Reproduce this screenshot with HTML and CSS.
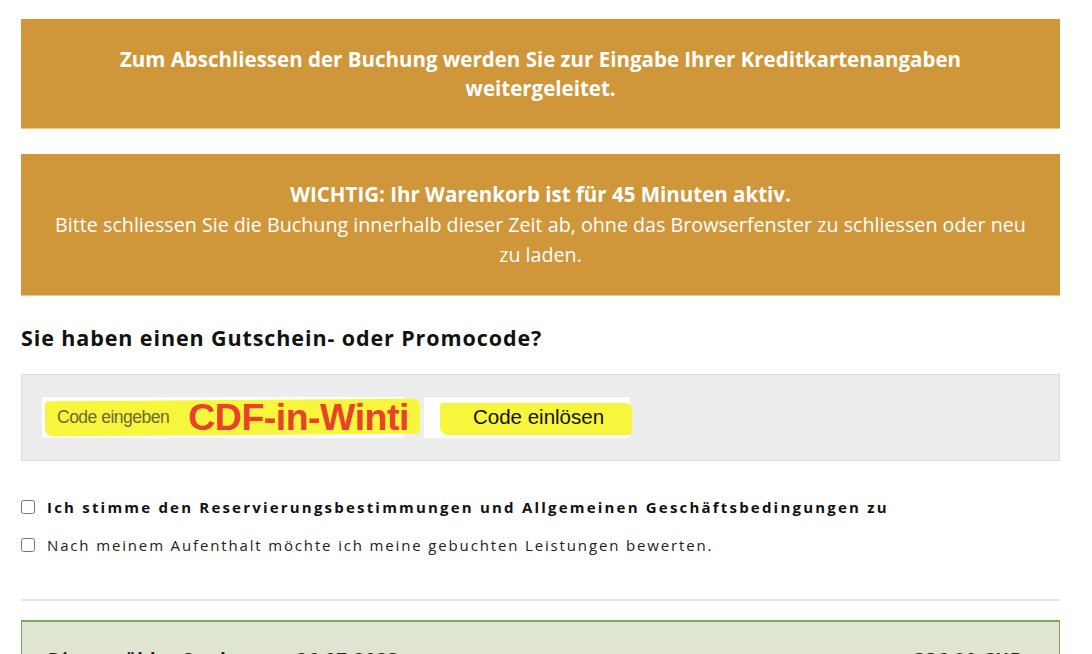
FILE: index.html
```html
<!DOCTYPE html>
<html lang="de">
<head>
<meta charset="utf-8">
<title>Buchung abschliessen</title>
<link rel="stylesheet" href="styles.css">
</head>
<body>
<main class="page">
  <div class="notice notice-first">
    <p class="notice-bold">Zum Abschliessen der Buchung werden Sie zur Eingabe Ihrer Kreditkartenangaben weitergeleitet.</p>
  </div>
  <div class="notice notice-second">
    <p class="notice-bold">WICHTIG: Ihr Warenkorb ist für 45 Minuten aktiv.</p>
    <p class="notice-regular">Bitte schliessen Sie die Buchung innerhalb dieser Zeit ab, ohne das Browserfenster zu schliessen oder neu zu laden.</p>
  </div>

  <h2 class="promo-title">Sie haben einen Gutschein- oder Promocode?</h2>
  <div class="promo-box">
    <div class="promo-input">
      <span class="marker marker-input"></span>
      <span class="placeholder">Code eingeben</span>
      <span class="code-value">CDF-in-Winti</span>
    </div>
    <div class="promo-button">
      <span class="marker marker-button"></span>
      <span class="button-label">Code einlösen</span>
    </div>
  </div>

  <label class="check-row check-strong"><input type="checkbox"><span>Ich stimme den Reservierungsbestimmungen und Allgemeinen Geschäftsbedingungen zu</span></label>
  <label class="check-row"><input type="checkbox"><span>Nach meinem Aufenthalt möchte ich meine gebuchten Leistungen bewerten.</span></label>

  <hr class="divider">

  <div class="summary">
    <span class="summary-label">Die gewählte Stadttour - 26.07.2023</span>
    <span class="summary-price">336.00 CHF</span>
  </div>
</main>
</body>
</html>
```

FILE: styles.css
```css
html, body {
  margin: 0;
  padding: 0;
  background: #ffffff;
}

body {
  font-family: "Open Sans", "Liberation Sans", sans-serif;
  color: #111;
}

.page {
  width: 1039px;
  margin-left: 21px;
  padding-top: 19px;
}

.notice {
  background: #d0963a;
  color: #ffffff;
  text-align: center;
  border-bottom: 1px solid #e7c88f;
}

.notice p {
  margin: 0;
}

.notice-first {
  padding: 26px 60px 25px;
  line-height: 29px;
}

.notice-second {
  margin-top: 25px;
  padding: 25px 30px 24px;
  line-height: 30.5px;
}

.notice-bold {
  font-weight: 700;
  font-size: 20.5px;
}

.notice-regular {
  font-family: "Open Sans", sans-serif;
  font-size: 19.7px;
  font-weight: 400;
}

.promo-title {
  margin: 28px 0 22px;
  font-family: "Open Sans", "Liberation Sans", sans-serif;
  font-size: 21.5px;
  font-weight: 700;
  line-height: 28px;
  color: #111;
  letter-spacing: 0.9px;
}

.promo-box {
  display: flex;
  align-items: center;
  gap: 20px;
  height: 85px;
  padding: 0 20px;
  background: #ededed;
  border: 1px solid #dcdcdc;
}

.promo-input,
.promo-button {
  position: relative;
  display: flex;
  align-items: center;
  flex-shrink: 0;
  height: 41px;
  background: #ffffff;
  white-space: nowrap;
}

.promo-input {
  width: 362px;
}

.promo-button {
  width: 206px;
}

.marker {
  position: absolute;
  background: #f7f53c;
  border-radius: 3px 6px 4px 8px;
  filter: blur(0.6px);
}

.marker-input {
  left: 3px;
  right: -16px;
  top: 3px;
  bottom: 3px;
  transform: skewY(-0.4deg);
}

.marker-button {
  left: 16px;
  right: -2px;
  top: 6px;
  bottom: 3px;
}

.placeholder {
  position: relative;
  flex-shrink: 0;
  margin-left: 15px;
  font-family: "Liberation Sans", Arial, sans-serif;
  font-size: 17.5px;
  color: #6b6a2e;
  letter-spacing: -0.5px;
}

.code-value {
  position: relative;
  flex-shrink: 0;
  margin-left: 19px;
  font-family: "Liberation Sans", Arial, sans-serif;
  font-size: 37.5px;
  font-weight: 700;
  color: #e8432a;
  letter-spacing: -0.5px;
}

.button-label {
  position: relative;
  margin-left: 49px;
  font-family: "Liberation Sans", Arial, sans-serif;
  font-size: 20.5px;
  color: #111;
}

.check-row {
  display: flex;
  align-items: center;
  gap: 12px;
  font-family: "Open Sans", sans-serif;
  font-size: 15px;
  letter-spacing: 1.85px;
  color: #222;
}

.check-row input {
  width: 14px;
  height: 14px;
  margin: 0;
}

.check-strong {
  margin-top: 36px;
  font-weight: 700;
  color: #111;
  letter-spacing: 2.2px;
}

.check-row + .check-row {
  margin-top: 18px;
}

.divider {
  margin: 44px 0 0;
  border: 0;
  border-top: 2px solid #e6e6e6;
}

.summary {
  margin-top: 19px;
  display: flex;
  justify-content: space-between;
  padding: 25px 38px 20px 26px;
  background: #dfe5d0;
  border: 1px solid #7aa862;
  border-top-width: 2px;
  font-family: "Open Sans", sans-serif;
  font-size: 18px;
  font-weight: 700;
  color: #222;
  letter-spacing: 1px;
}
```
